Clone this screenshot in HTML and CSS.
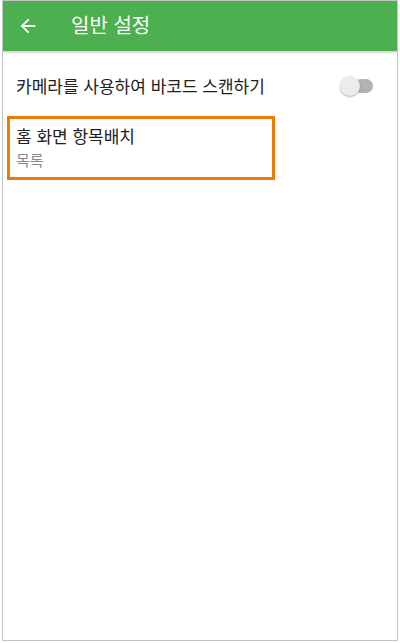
FILE: index.html
```html
<!DOCTYPE html>
<html lang="ko">
  <head>
    <meta charset="UTF-8" />
    <meta name="viewport" content="width=device-width, initial-scale=1.0" />
    <title>일반 설정</title>
    <link rel="stylesheet" href="styles.css">
  </head>
  <body>
    <div class="screen">
      <div class="toolbar">
        <a class="back" href="#">
          <svg width="22" height="22" viewBox="0 0 24 24">
            <path d="M20 11H7.83l5.59-5.59L12 4l-8 8 8 8 1.41-1.41L7.83 13H20v-2z" fill="#fff" />
          </svg>
        </a>
        <h1 class="title">일반 설정</h1>
      </div>
      <ul class="pref-list">
        <li class="pref">
          <span class="pref-title">카메라를 사용하여 바코드 스캔하기</span>
          <span class="switch"><span class="thumb"></span></span>
        </li>
        <li class="pref focused">
          <span class="pref-title">홈 화면 항목배치</span>
          <span class="pref-summary">목록</span>
        </li>
      </ul>
    </div>
  </body>
</html>
```

FILE: styles.css
```css
html,
body {
  margin: 0;
  padding: 0;
  background: #fff;
}
ul {
  margin: 0;
  padding: 0;
  list-style: none;
}
a {
  text-decoration: none;
  color: inherit;
}
.screen {
  box-sizing: border-box;
  width: 396px;
  height: 641px;
  margin-left: 2px;
  border: 1px solid #c4c4c4;
  font-family: "Noto Sans CJK KR", "Noto Sans", sans-serif;
  overflow: hidden;
}
.toolbar {
  display: flex;
  align-items: center;
  height: 50px;
  background: #4caf50;
  box-shadow: 0 1px 3px rgba(0, 0, 0, 0.25);
  color: #fff;
}
.back {
  display: flex;
  width: 22px;
  height: 22px;
  margin-left: 14px;
}
.title {
  margin: 0 0 2px 32px;
  font-size: 20px;
  font-weight: 400;
  line-height: 26px;
}
.pref-list .pref {
  display: flex;
  color: #212121;
}
.pref-list .pref:first-child {
  align-items: center;
  height: 57px;
  padding: 6px 24px 0 13px;
}
.pref-title {
  flex: 1;
  font-size: 17px;
  line-height: 22px;
}
.switch {
  position: relative;
  width: 19px;
  height: 14px;
  border-radius: 7px;
  background: #b2b2b2;
}
.switch .thumb {
  position: absolute;
  top: -3px;
  left: -14px;
  width: 20px;
  height: 20px;
  border-radius: 50%;
  background: #ececec;
  box-shadow: 0 1px 2px rgba(0, 0, 0, 0.3);
}
.pref-list .pref.focused {
  flex-direction: column;
  width: 256px;
  height: 58px;
  margin: 2px 0 0 4px;
  padding: 0 0 0 6px;
  border: 3px solid #ec7a08;
}
.focused .pref-title {
  flex: none;
  margin-top: 6px;
}
.pref-summary {
  margin-top: 3px;
  font-size: 15px;
  line-height: 20px;
  color: #888;
}
```
